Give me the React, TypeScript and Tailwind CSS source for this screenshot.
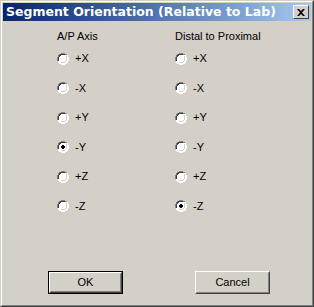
import { useState } from "react";

const axes = ["+X", "-X", "+Y", "-Y", "+Z", "-Z"];

function Radio({ checked }: { checked: boolean }) {
  return (
    <svg width="12" height="12" viewBox="0 0 12 12" className="shrink-0">
      <path d="M4 0h4v1h2v1h1v2h1v4h-1v2h-1v1h-2v1h-4v-1h-2v-1h-1v-2h-1v-4h1v-2h1v-1h2z" fill="#ffffff" />
      <path d="M4 0h4v1h2v1h-2v-1h-4v1h-2v2h-1v4h-1v-4h1v-2h1v-1h2z" fill="#808080" />
      <path d="M4 1h4v1h-4v1h-1v1h-1v4h-1v-4h1v-2h1v-1h1z" fill="#404040" />
      <path d="M10 2h1v2h1v4h-1v2h-1v1h-2v1h-4v-1h4v-1h2v-2h1v-4h-1z" fill="#ffffff" />
      <path d="M9 3h1v1h0v4h-1v1h-1v1h-4v-1h4v-1h1z" fill="#d4d0c8" />
      {checked ? <path d="M5 4h2v1h1v2h-1v1h-2v-1h-1v-2h1z" fill="#000000" /> : null}
    </svg>
  );
}

function AxisColumn({
  title,
  value,
  onChange,
}: {
  title: string;
  value: string;
  onChange: (v: string) => void;
}) {
  return (
    <div className="flex w-[118px] flex-col">
      <p className="h-[13px] leading-[13px]">{title}</p>
      <div className="mt-[1px] flex flex-col">
        {axes.map((axis) => (
          <label
            key={axis}
            className="flex h-[29.5px] cursor-default items-center gap-[6px]"
            onClick={() => onChange(axis)}
          >
            <Radio checked={value === axis} />
            <span className="leading-[13px]">{axis}</span>
          </label>
        ))}
      </div>
    </div>
  );
}

function ClassicButton({ label, isDefault }: { label: string; isDefault?: boolean }) {
  return (
    <button
      type="button"
      className={`h-[23px] w-[75px] bg-[#d4d0c8] p-0 text-black ${
        isDefault ? "border border-black" : ""
      }`}
    >
      <span className="flex h-full w-full items-center justify-center border border-t-white border-l-white border-r-[#404040] border-b-[#404040]">
        <span className="flex h-full w-full items-center justify-center border border-t-[#d4d0c8] border-l-[#d4d0c8] border-r-[#808080] border-b-[#808080]">
          {label}
        </span>
      </span>
    </button>
  );
}

export default function App() {
  const [ap, setAp] = useState("-Y");
  const [distal, setDistal] = useState("-Z");

  return (
    <div className="h-[307px] w-[314px] border border-t-[#d4d0c8] border-l-[#d4d0c8] border-r-[#404040] border-b-[#404040] bg-[#d4d0c8] font-['Liberation_Sans',Arial,sans-serif] text-[11px] text-black">
      <div className="flex h-full w-full flex-col border border-t-white border-l-white border-r-[#808080] border-b-[#808080] p-px">
        <div className="flex h-[18px] items-center justify-between bg-gradient-to-r from-[#0a246a] to-[#a6caf0] pr-[2px] pl-[3px]">
          <span className="font-['DejaVu_Sans',sans-serif] text-[12.5px] leading-[16px] font-bold text-white">
            Segment Orientation (Relative to Lab)
          </span>
          <div className="flex h-[14px] w-[16px] items-center justify-center border border-t-white border-l-white border-r-[#404040] border-b-[#404040] bg-[#d4d0c8]">
            <svg width="8" height="7" viewBox="0 0 8 7">
              <path d="M0 0h2l2 2 2-2h2l-3 3.5 3 3.5h-2l-2-2-2 2h-2l3-3.5z" fill="#000" />
            </svg>
          </div>
        </div>
        <div className="flex pt-[9px] pl-[54px]">
          <AxisColumn title="A/P Axis" value={ap} onChange={setAp} />
          <AxisColumn title="Distal to Proximal" value={distal} onChange={setDistal} />
        </div>
        <div className="mt-[50px] flex gap-[72px] pl-[45px]">
          <ClassicButton label="OK" isDefault />
          <ClassicButton label="Cancel" />
        </div>
      </div>
    </div>
  );
}
